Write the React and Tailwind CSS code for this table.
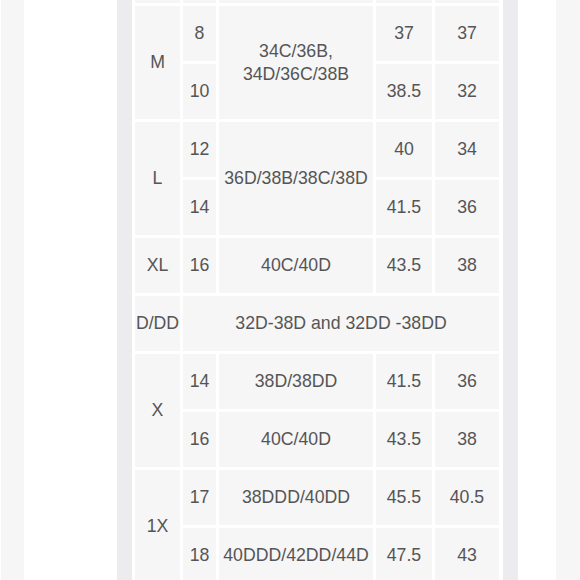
import React from "react";

const C = ({ children, className = "" }) => (
  <div className={"bg-[#f6f6f6] flex items-center justify-center text-center " + className}>{children}</div>
);

export default function App() {
  return (
    <div
      className="flex h-[580px] w-[580px] overflow-hidden bg-white text-[#555] text-[17.7px] leading-[23px]"
      style={{ fontFamily: '"Liberation Sans", Arial, sans-serif' }}
    >
      <div className="w-[1px] bg-white" />
      <div className="w-[23px] bg-[#f6f6f6]" />
      <div className="w-[93px] bg-white" />
      <div className="w-[15px] bg-[#ececee]" />
      <div className="w-[371px] bg-white px-[3px]">
        <div className="grid grid-cols-[45px_33px_154px_56px_64px] grid-rows-[3px_repeat(10,55px)] gap-[3px]">
          <C />
          <C />
          <C />
          <C />
          <C />

          <C className="row-span-2">M</C>
          <C>8</C>
          <C className="row-span-2">34C/36B,<br />34D/36C/38B</C>
          <C>37</C>
          <C>37</C>
          <C>10</C>
          <C>38.5</C>
          <C>32</C>

          <C className="row-span-2">L</C>
          <C>12</C>
          <C className="row-span-2">36D/38B/38C/38D</C>
          <C>40</C>
          <C>34</C>
          <C>14</C>
          <C>41.5</C>
          <C>36</C>

          <C>XL</C>
          <C>16</C>
          <C>40C/40D</C>
          <C>43.5</C>
          <C>38</C>

          <C>D/DD</C>
          <C className="col-span-4">32D-38D and 32DD -38DD</C>

          <C className="row-span-2">X</C>
          <C>14</C>
          <C>38D/38DD</C>
          <C>41.5</C>
          <C>36</C>
          <C>16</C>
          <C>40C/40D</C>
          <C>43.5</C>
          <C>38</C>

          <C className="row-span-2">1X</C>
          <C>17</C>
          <C>38DDD/40DD</C>
          <C>45.5</C>
          <C>40.5</C>
          <C>18</C>
          <C>40DDD/42DD/44D</C>
          <C>47.5</C>
          <C>43</C>
        </div>
      </div>
      <div className="w-[15px] bg-[#ececee]" />
      <div className="w-[38px] bg-white" />
      <div className="w-[24px] bg-[#f6f6f6]" />
    </div>
  );
}
